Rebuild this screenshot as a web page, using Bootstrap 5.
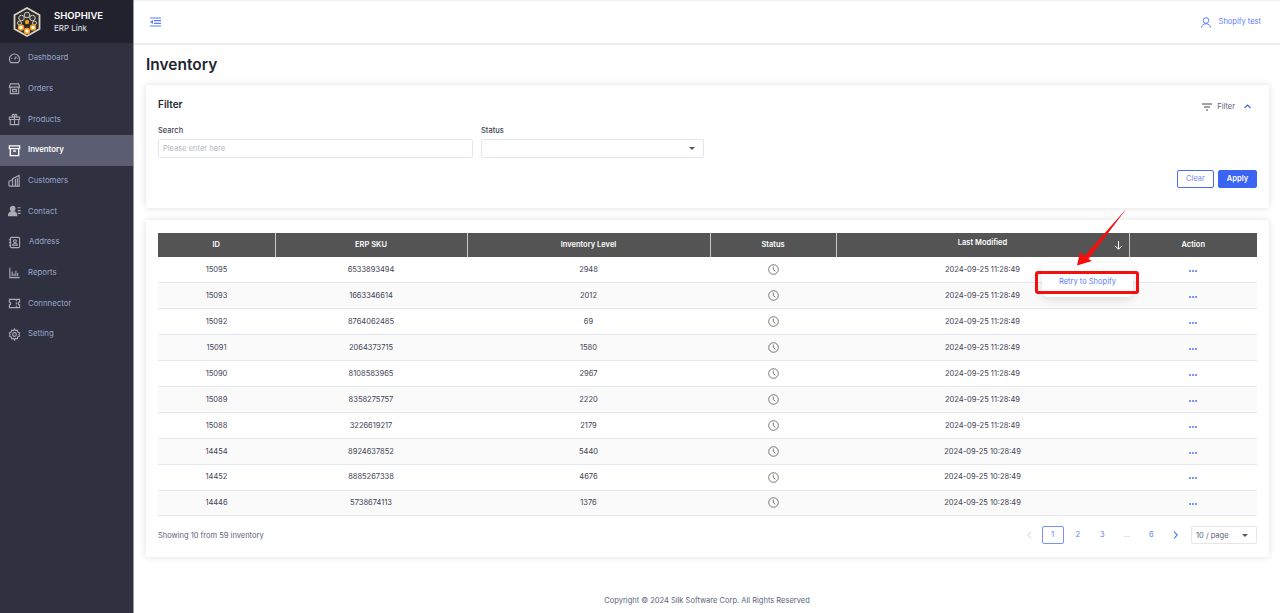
<!DOCTYPE html>
<html lang="en">
<head>
  <meta charset="UTF-8">
  <title>Inventory</title>
  <link href="https://cdn.jsdelivr.net/npm/bootstrap@5.3.0/dist/css/bootstrap.min.css" rel="stylesheet">
  <style>
    html, body { height: 613px; overflow: hidden; }
    body { font-family: Inter, "Liberation Sans", sans-serif; font-size: 7.5px; color: #3f4254; background: #fff; }
    .side-bar { width: 134px; height: 613px; background: #2f3140; border-right: 1px solid #9a9a9f; }
    .side-brand { height: 43px; background: #22222f; color: #fff; padding-left: 12px; }
    .brand-name { font-size: 9.5px; font-weight: 600; line-height: 12px; }
    .brand-sub { font-size: 8px; line-height: 12px; color: #e4e6ef; }
    .side-link { height: 30.65px; padding-left: 8px; font-size: 7.8px; color: #98a5cc; gap: 7px; text-decoration: none; }
    .side-link svg { width: 13px; height: 13px; flex: none; stroke: #a9abb5; fill: none; stroke-width: 1.2; }
    .side-link.on-page { background: #5b5d72; color: #fff; font-weight: 600; }
    .side-link.on-page svg { stroke: #fff; }
    .addr-text { margin-left: 1px; }
    .top-bar { height: 45px; border-top: 1px solid #eee; border-bottom: 2px solid #eee; padding: 0 19px 0 16px; color: #5b7cfa; }
    .page-title { font-size: 15.5px; font-weight: 600; line-height: 20px; color: #23252f; margin: 10px 0 10px 12px; }
    .panel { margin: 0 11px 12px 12px; border: 0; border-radius: 2px; box-shadow: 0 0 7px rgba(0,0,0,.13); }
    .filter-panel { height: 123px; padding: 12px; }
    .table-panel { height: 337px; padding: 13px 12px 0; }
    .filter-title { font-size: 10px; font-weight: 600; color: #23252f; line-height: 14px; margin-top: 0; }
    .filter-toggle { color: #5e6278; gap: 5px; margin-right: 6px; margin-top: 4px; }
    .filter-fields { margin-top: 13px; }
    .field-label { font-weight: 500; color: #3f4254; line-height: 11px; margin-bottom: 3px; }
    .field-box { height: 19px; border: 1px solid #e3e5f2; border-radius: 2px; padding: 0 4px; line-height: 17px; color: #b5b5c3; }
    .field-search { width: 315px; }
    .field-status { width: 223px; padding-right: 8px; }
    .caret-down { width: 0; height: 0; border-left: 3px solid transparent; border-right: 3px solid transparent; border-top: 3px solid #555; }
    .btn-clear, .btn-apply { height: 18px; font-size: 7.5px; padding: 0; border-radius: 2px; }
    .btn-clear { width: 37px; color: #7b90f5; background: #fff; border: 1px solid #4a6cf7; }
    .btn-apply { width: 39px; color: #fff; background: #3c64f4; border: 1px solid #3c64f4; font-weight: 600; }
    .stock-table { width: 1099px; table-layout: fixed; margin: 0; font-size: 7.5px; }
    .stock-table th { height: 24px; padding: 0; background: #545454; color: #fff; font-weight: 600; text-align: center; vertical-align: middle; border-right: 1px solid #c9c9c9; border-bottom: 0; }
    .stock-table th:last-child { border-right: 0; }
    .stock-table td { height: 25.9px; padding: 0; text-align: center; vertical-align: middle; border-bottom: 1px solid #e6e6f0; color: #3f4254; }
    .stock-table tbody tr:nth-child(even) td { background: #fafafa; }
    .modified-head { position: relative; }
    .modified-head span { position: relative; top: -2px; }
    .modified-head svg { position: absolute; right: 6px; top: 8px; }
    .clock-mark { width: 11px; height: 11px; display: block; margin: 0 auto; }
    .dots-mark { gap: 1px; }
    .dots-mark i { width: 2px; height: 2px; background: #7f97fb; }
    .showing-text { color: #5e6278; }
    .pager-row { margin-top: 10px; }
    .pager-item { width: 24.5px; height: 18px; line-height: 16px; text-align: center; color: #5b7cfa; border: 1px solid transparent; }
    .pager-item.now-page { width: 22px; margin-right: 2px; border-color: #7b90f5; border-radius: 2px; }
    .pager-size { width: 66px; height: 18px; margin-left: 3px; border: 1px solid #e3e5f2; border-radius: 2px; padding: 0 8px 0 4px; color: #5e6278; }
    .foot-note { color: #5e6278; text-align: center; margin-top: 38px; line-height: 11px; }
    .retry-menu { position: absolute; left: 1042px; top: 263px; width: 91px; height: 34px; background: #fff; border-radius: 6px; box-shadow: 0 3px 10px rgba(0,0,0,.12); color: #5b7cfa; text-align: center; line-height: 37px; }
    .retry-mark { position: absolute; left: 1035px; top: 271px; width: 104px; height: 23px; border: 3px solid #f40f0f; border-radius: 3px; }
    .retry-arrow { position: absolute; left: 1070px; top: 205px; }
  </style>
</head>
<body class="d-flex">

  <aside class="side-bar flex-shrink-0">
    <div class="side-brand d-flex align-items-center gap-2">
      <svg width="30" height="32" viewBox="0 0 30 32">
        <path d="M15 2 27.500 9V23L15 30 2.500 23V9Z" fill="#2c2a2a" stroke="#d8d2c2" stroke-width="1.800"/>
        <g fill="#3a3a3c" stroke="#cfc9b9" stroke-width="1">
          <circle cx="15" cy="9" r="2.800"/><circle cx="9.500" cy="12" r="2.800"/><circle cx="20.500" cy="12" r="2.800"/>
          <circle cx="7.500" cy="17" r="2"/><circle cx="22.500" cy="17" r="2"/>
        </g>
        <g fill="#fff" stroke="#f49a1a" stroke-width="1.500">
          <circle cx="9" cy="21.500" r="2.500"/><circle cx="21" cy="21.500" r="2.500"/><circle cx="15" cy="25" r="2.500"/>
        </g>
        <circle cx="15" cy="16" r="2.200" fill="#f49a1a"/>
      </svg>
      <div class="ms-1">
        <div class="brand-name">SHOPHIVE</div>
        <div class="brand-sub">ERP Link</div>
      </div>
    </div>
    <nav class="d-flex flex-column">
      <a class="side-link d-flex align-items-center" href="#"><svg viewBox="0 0 14 14"><path d="M3 11.500a5.500 5.500 0 1 1 8 0Z"/><path d="M7 8l2-3M3.500 7H4.500M9.800 7H10.500"/></svg>Dashboard</a>
      <a class="side-link d-flex align-items-center" href="#"><svg viewBox="0 0 14 14"><path d="M2.500 2h9l1 3.500h-11ZM2.500 5.500V12.500h9V5.500M5 8h4v2.500H5Z"/></svg>Orders</a>
      <a class="side-link d-flex align-items-center" href="#"><svg viewBox="0 0 14 14"><path d="M1.500 4.500h11v2.500h-11ZM2.500 7v5.500h9V7M7 4.500v8M7 4.500C4 4.500 4 1.500 5.500 1.500 6.500 1.500 7 3 7 4.500 7 3 7.500 1.500 8.500 1.500 10 1.500 10 4.500 7 4.500Z"/></svg>Products</a>
      <a class="side-link on-page d-flex align-items-center" href="#"><svg viewBox="0 0 14 14"><path d="M1.500 2h11v3h-11ZM2.500 5v7.500h9V5M5.500 7.500h3" stroke-width="1.500"/></svg>Inventory</a>
      <a class="side-link d-flex align-items-center" href="#"><svg viewBox="0 0 14 14"><path d="M1 13V8l4-2v7M5 13V5l7-3.500V13ZM1 13h12M8 5.500v7M10 4.500v8"/></svg>Customers</a>
      <a class="side-link d-flex align-items-center" href="#"><svg viewBox="0 0 14 14"><circle cx="5" cy="4" r="2.500" fill="#a9abb5"/><path d="M.5 11.500c0-6 9-6 9 0Z" fill="#a9abb5"/><path d="M10.500 3h3M10.500 6h3M10.500 9h3"/></svg>Contact</a>
      <a class="side-link d-flex align-items-center" href="#"><svg viewBox="0 0 14 14"><rect x="2.500" y="1.500" width="10" height="11" rx="1.500"/><circle cx="7.500" cy="5.500" r="1.500"/><path d="M5 10c0-2.500 5-2.500 5 0ZM1 4h2.500M1 7h2.500M1 10h2.500"/></svg><span class="addr-text">Address</span></a>
      <a class="side-link d-flex align-items-center" href="#"><svg viewBox="0 0 14 14"><path d="M2 2v10.500h10.500M4.500 11V6M6.500 11V8M8.500 11V5M10.500 11V7.500"/></svg>Reports</a>
      <a class="side-link d-flex align-items-center" href="#"><svg viewBox="0 0 14 14"><path d="M1.500 2.500h11v3a1.500 1.500 0 0 0 0 3v3h-11v-3a1.500 1.500 0 0 0 0-3ZM9 2.500v2M9 6v2M9 9.500v2"/></svg>Connnector</a>
      <a class="side-link d-flex align-items-center" href="#"><svg viewBox="0 0 14 14"><path d="M7 1l1 1.800 2-.4.600 2 1.900.900-.8 1.700.8 1.700-1.900.900-.6 2-2-.4-1 1.800-1-1.800-2 .4-.6-2-1.900-.9.800-1.700-.8-1.700 1.900-.9.600-2 2 .4Z"/><circle cx="7" cy="7" r="2"/></svg>Setting</a>
    </nav>
  </aside>

  <main class="flex-grow-1">
    <header class="top-bar d-flex align-items-center justify-content-between">
      <svg width="11" height="10" viewBox="0 0 11 10" fill="none" stroke="#5b7cfa" stroke-width="1.200"><path d="M0 1h11M4 3.700h7M4 6.300h7M0 9h11"/><path d="M3 3 0 5l3 2Z" fill="#5b7cfa" stroke="none"/></svg>
      <div class="d-flex align-items-center gap-1">
        <svg class="me-1" width="10" height="11" viewBox="0 0 10 11" fill="none" stroke="#5b7cfa" stroke-width="1"><circle cx="5" cy="3.500" r="2.800"/><path d="M.5 10.500c.3-5 8.700-5 9 0"/></svg>
        <span>Shopify test</span>
      </div>
    </header>

    <h1 class="page-title">Inventory</h1>

    <section class="panel card filter-panel">
      <div class="d-flex justify-content-between align-items-start">
        <div class="filter-title">Filter</div>
        <div class="filter-toggle d-flex align-items-center">
          <svg width="10" height="8" viewBox="0 0 10 8" fill="none" stroke="#444" stroke-width="1"><path d="M0 1h10M2 4h6M4 7h2"/></svg>
          <span>Filter</span>
          <svg class="ms-1" width="7" height="5" viewBox="0 0 7 5" fill="none" stroke="#3c64f4" stroke-width="1.100"><path d="M.5 4 3.500 1l3 3"/></svg>
        </div>
      </div>
      <div class="filter-fields d-flex gap-2">
        <div>
          <div class="field-label">Search</div>
          <div class="field-box field-search">Please enter here</div>
        </div>
        <div>
          <div class="field-label">Status</div>
          <div class="field-box field-status d-flex align-items-center justify-content-end"><span class="caret-down"></span></div>
        </div>
      </div>
      <div class="d-flex justify-content-end gap-1 mt-auto mb-2">
        <button class="btn-clear btn" type="button">Clear</button>
        <button class="btn-apply btn" type="button">Apply</button>
      </div>
    </section>

    <section class="panel card table-panel">
      <table class="stock-table table">
        <colgroup>
          <col style="width:117px"><col style="width:192px"><col style="width:243px"><col style="width:126px"><col style="width:293px"><col style="width:128px">
        </colgroup>
        <thead>
          <tr>
            <th>ID</th><th>ERP SKU</th><th>Inventory Level</th><th>Status</th>
            <th class="modified-head"><span>Last Modified</span>
              <svg width="9" height="9" viewBox="0 0 9 9" fill="none" stroke="#fff" stroke-width="1"><path d="M4.500 0v8M1 4.800l3.500 3.500L8 4.800"/></svg>
            </th>
            <th>Action</th>
          </tr>
        </thead>
        <tbody id="stock-rows"></tbody>
      </table>
      <div class="pager-row d-flex justify-content-between align-items-center">
        <div class="showing-text">Showing 10 from 59 inventory</div>
        <div class="d-flex align-items-center">
          <div class="pager-item"><svg width="5" height="8" viewBox="0 0 5 8" fill="none" stroke="#d5d9ec" stroke-width="1.100"><path d="M4 .5.800 4 4 7.500"/></svg></div>
          <div class="pager-item now-page">1</div>
          <div class="pager-item">2</div>
          <div class="pager-item">3</div>
          <div class="pager-item text-secondary opacity-50">...</div>
          <div class="pager-item">6</div>
          <div class="pager-item"><svg width="5" height="8" viewBox="0 0 5 8" fill="none" stroke="#3c64f4" stroke-width="1.100"><path d="M1 .5 4.200 4 1 7.500"/></svg></div>
          <div class="pager-size d-flex align-items-center justify-content-between"><span>10 / page</span><span class="caret-down"></span></div>
        </div>
      </div>
    </section>

    <div class="foot-note">Copyright © 2024 Silk Software Corp. All Rights Reserved</div>
  </main>

  <!-- row action menu and the red annotation on top of the table -->
  <div class="retry-menu">Retry to Shopify</div>
  <div class="retry-mark"></div>
  <svg class="retry-arrow" width="60" height="65" viewBox="0 0 60 65">
    <path d="M57 3 18.500 54 22 56 7 60.500 10 47 14.500 51Z" fill="#f40f0f"/>
  </svg>

  <script src="https://cdn.jsdelivr.net/npm/bootstrap@5.3.0/dist/js/bootstrap.bundle.min.js"></script>
  <script>
    const rows = [
      [15095, '6533893494', 2948, '11:28:49'],
      [15093, '1663346614', 2012, '11:28:49'],
      [15092, '8764062485', 69, '11:28:49'],
      [15091, '2064373715', 1580, '11:28:49'],
      [15090, '8108583965', 2967, '11:28:49'],
      [15089, '8358275757', 2220, '11:28:49'],
      [15088, '3226619217', 2179, '11:28:49'],
      [14454, '8924637852', 5440, '10:28:49'],
      [14452, '8885267338', 4676, '10:28:49'],
      [14446, '5738674113', 1376, '10:28:49']
    ];
    const clock = '<svg class="clock-mark" viewBox="0 0 11 11" fill="none" stroke="#777" stroke-width="1"><circle cx="5.500" cy="5.500" r="4.800"/><path d="M5.300 2.500v3.200l2 1.600"/></svg>';
    const dots = '<span class="dots-mark d-inline-flex"><i></i><i></i><i></i></span>';
    document.getElementById('stock-rows').innerHTML = rows.map(r => `
      <tr>
        <td>${r[0]}</td><td>${r[1]}</td><td>${r[2]}</td><td>${clock}</td>
        <td>2024-09-25 ${r[3]}</td><td>${dots}</td>
      </tr>`).join('');
  </script>
</body>
</html>
